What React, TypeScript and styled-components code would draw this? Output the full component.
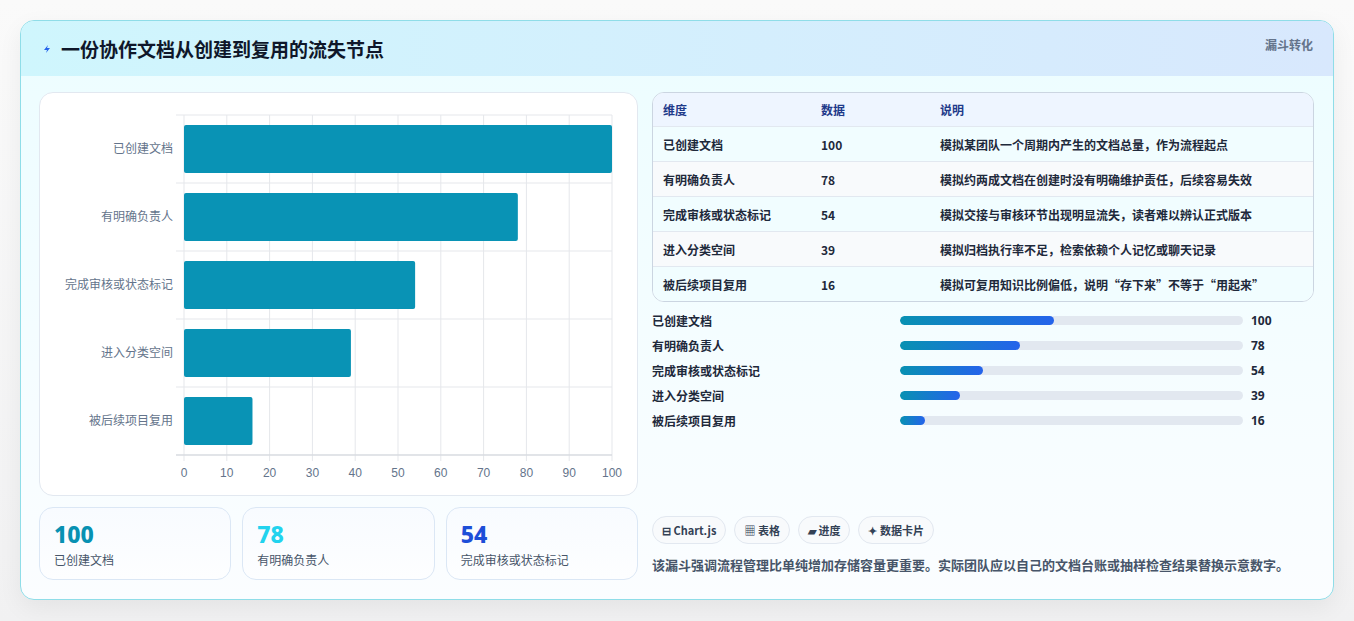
import React from "react";
import styled, { createGlobalStyle } from "styled-components";

const Global = createGlobalStyle`
  html, body { margin: 0; padding: 0; background: #f3f4f6; }
  body { font-family: "Noto Sans CJK SC", "Noto Sans", sans-serif; width: 1354px; height: 621px; overflow: hidden; }
  * { box-sizing: border-box; }
`;

const Page = styled.div`
  padding: 20px 20px 0 20px;
  height: 621px;
  background: linear-gradient(#fafafa, #f1f1f2);
`;
const Card = styled.div`
  width: 1314px;
  height: 580px;
  border: 1px solid #8fdde8;
  border-radius: 14px;
  overflow: hidden;
  background: linear-gradient(180deg, #ecfdff 0%, #fbfdff 100%);
  box-shadow: 0 8px 24px rgba(0,0,0,0.06);
`;
const Header = styled.div`
  height: 55px;
  display: flex;
  align-items: center;
  justify-content: space-between;
  padding: 0 20px 0 20px;
  background: linear-gradient(90deg, #cff6fd 0%, #d8e8fd 100%);
`;
const Title = styled.h1`
  margin: 0;
  font-size: 19px;
  font-weight: 700;
  color: #0f172a;
  display: flex;
  align-items: center;
  gap: 8px;
`;
const Tag = styled.span`
  font-size: 12px;
  font-weight: 700;
  color: #64748b;
  align-self: flex-start;
  margin-top: 15px;
`;
const Body = styled.div`
  display: grid;
  grid-template-columns: 599px 662px;
  gap: 14px;
  padding: 16px 19px 18px 18px;
`;
const Col = styled.div`
  display: flex;
  flex-direction: column;
  gap: 11px;
`;
const ChartPanel = styled.div`
  height: 404px;
  background: #fff;
  border: 1px solid #e2e8f0;
  border-radius: 14px;
`;
const Kpis = styled.div`
  display: grid;
  grid-template-columns: repeat(3, 1fr);
  gap: 11px;
`;
const Kpi = styled.div`
  height: 73px;
  border: 1px solid #dbe7f5;
  border-radius: 14px;
  background: linear-gradient(180deg, #f8fbff, #fdfeff);
  padding: 12px 14px;
`;
const KpiNum = styled.div<{ $c: string }>`
  font-size: 23px;
  font-weight: 800;
  line-height: 28px;
  color: ${p => p.$c};
  font-family: "Noto Sans", sans-serif;
`;
const KpiLabel = styled.div`
  font-size: 12px;
  color: #475569;
  margin-top: 3px;
`;
const Table = styled.div`
  border: 1px solid #cbd5e1;
  border-radius: 12px;
  overflow: hidden;
  background: #fff;
`;
const Row = styled.div<{ $head?: boolean; $alt?: boolean }>`
  display: grid;
  grid-template-columns: 158px 119px 1fr;
  height: ${p => (p.$head ? 33 : 35)}px;
  align-items: center;
  padding-left: 10px;
  font-size: 12px;
  font-weight: ${p => (p.$head ? 700 : 600)};
  color: ${p => (p.$head ? "#1e3a8a" : "#1e293b")};
  background: ${p => (p.$head ? "#eef5ff" : p.$alt ? "#f8fafc" : "#f1fdff")};
  border-top: ${p => (p.$head ? "none" : "1px solid #e2e8f0")};
`;
const Bars = styled.div`
  display: flex;
  flex-direction: column;
  gap: 7px;
  padding-top: 9px;
`;
const BarRow = styled.div`
  display: grid;
  grid-template-columns: 248px 343px auto;
  align-items: center;
  gap: 0;
  height: 18px;
  font-size: 12px;
  font-weight: 600;
  color: #1e293b;
`;
const Track = styled.div`
  height: 9px;
  border-radius: 5px;
  background: #e2e8f0;
  overflow: hidden;
`;
const Fill = styled.div`
  height: 100%;
  border-radius: 5px;
  background: linear-gradient(90deg, #0891b2, #2563eb);
`;
const BarVal = styled.span`
  padding-left: 8px;
  font-weight: 700;
  font-family: "Noto Sans", sans-serif;
`;
const Chips = styled.div`
  display: flex;
  gap: 8px;
  margin-top: auto;
`;
const Chip = styled.span`
  height: 28px;
  padding: 0 9px;
  border: 1px solid #e2e8f0;
  border-radius: 14px;
  background: #f8fafc;
  display: inline-flex;
  align-items: center;
  gap: 3px;
  font-size: 11px;
  font-weight: 700;
  color: #334155;
`;
const Note = styled.p`
  margin: 11px 0 6px;
  font-size: 13px;
  font-weight: 600;
  color: #475569;
`;

const data = [
  ["已创建文档", 100, "模拟某团队一个周期内产生的文档总量，作为流程起点"],
  ["有明确负责人", 78, "模拟约两成文档在创建时没有明确维护责任，后续容易失效"],
  ["完成审核或状态标记", 54, "模拟交接与审核环节出现明显流失，读者难以辨认正式版本"],
  ["进入分类空间", 39, "模拟归档执行率不足，检索依赖个人记忆或聊天记录"],
  ["被后续项目复用", 16, "模拟可复用知识比例偏低，说明“存下来”不等于“用起来”"],
] as const;

function Chart() {
  const x0 = 144, x1 = 572, y0 = 22, y1 = 362;
  const sx = (v: number) => x0 + ((x1 - x0) * v) / 100;
  const rowH = (y1 - y0) / 5;
  return (
    <svg width="599" height="404" style={{ display: "block" }}>
      {Array.from({ length: 11 }, (_, i) => (
        <line key={i} x1={sx(i * 10)} x2={sx(i * 10)} y1={y0} y2={y1 + 6} stroke="#e5e7eb" />
      ))}
      {Array.from({ length: 6 }, (_, i) => (
        <line key={i} x1={x0 - 8} x2={x1} y1={y0 + i * rowH} y2={y0 + i * rowH} stroke="#e5e7eb" />
      ))}
      <line x1={x0 - 8} x2={x1} y1={y1} y2={y1} stroke="#d1d5db" />
      {data.map(([l, v], i) => {
        const cy = y0 + rowH * i + rowH / 2;
        return (
          <g key={l}>
            <rect x={x0} y={cy - 24} width={sx(v) - x0} height={48} fill="#0993b5" rx="2" />
            <text x={x0 - 11} y={cy + 4} textAnchor="end" fontSize="12" fill="#64748b">{l}</text>
          </g>
        );
      })}
      {Array.from({ length: 11 }, (_, i) => (
        <text key={i} x={sx(i * 10)} y={384} textAnchor="middle" fontSize="12" fill="#64748b" fontFamily="Liberation Sans, sans-serif">{i * 10}</text>
      ))}
    </svg>
  );
}

export default function App() {
  return (
    <>
      <Global />
      <Page>
        <Card>
          <Header>
            <Title>
              <svg width="12" height="12" viewBox="0 0 12 12">
                <path d="M7 2 L3 7 L6 7 L5 10 L9 5 L6 5 Z" fill="#2563eb" />
              </svg>
              一份协作文档从创建到复用的流失节点
            </Title>
            <Tag>漏斗转化</Tag>
          </Header>
          <Body>
            <Col>
              <ChartPanel><Chart /></ChartPanel>
              <Kpis>
                <Kpi><KpiNum $c="#0891b2">100</KpiNum><KpiLabel>已创建文档</KpiLabel></Kpi>
                <Kpi><KpiNum $c="#22d3ee">78</KpiNum><KpiLabel>有明确负责人</KpiLabel></Kpi>
                <Kpi><KpiNum $c="#1d4ed8">54</KpiNum><KpiLabel>完成审核或状态标记</KpiLabel></Kpi>
              </Kpis>
            </Col>
            <Col style={{ gap: 0 }}>
              <Table>
                <Row $head><span>维度</span><span>数据</span><span>说明</span></Row>
                {data.map(([l, v, d], i) => (
                  <Row key={l} $alt={i % 2 === 1}><span>{l}</span><span>{v}</span><span>{d}</span></Row>
                ))}
              </Table>
              <Bars>
                {data.map(([l, v]) => (
                  <BarRow key={l}>
                    <span>{l}</span>
                    <Track><Fill style={{ width: `${v * 0.45}%` }} /></Track>
                    <BarVal>{v}</BarVal>
                  </BarRow>
                ))}
              </Bars>
              <Chips>
                <Chip>⊟ Chart.js</Chip>
                <Chip>▦ 表格</Chip>
                <Chip>▰ 进度</Chip>
                <Chip>✦ 数据卡片</Chip>
              </Chips>
              <Note>该漏斗强调流程管理比单纯增加存储容量更重要。实际团队应以自己的文档台账或抽样检查结果替换示意数字。</Note>
            </Col>
          </Body>
        </Card>
      </Page>
    </>
  );
}
